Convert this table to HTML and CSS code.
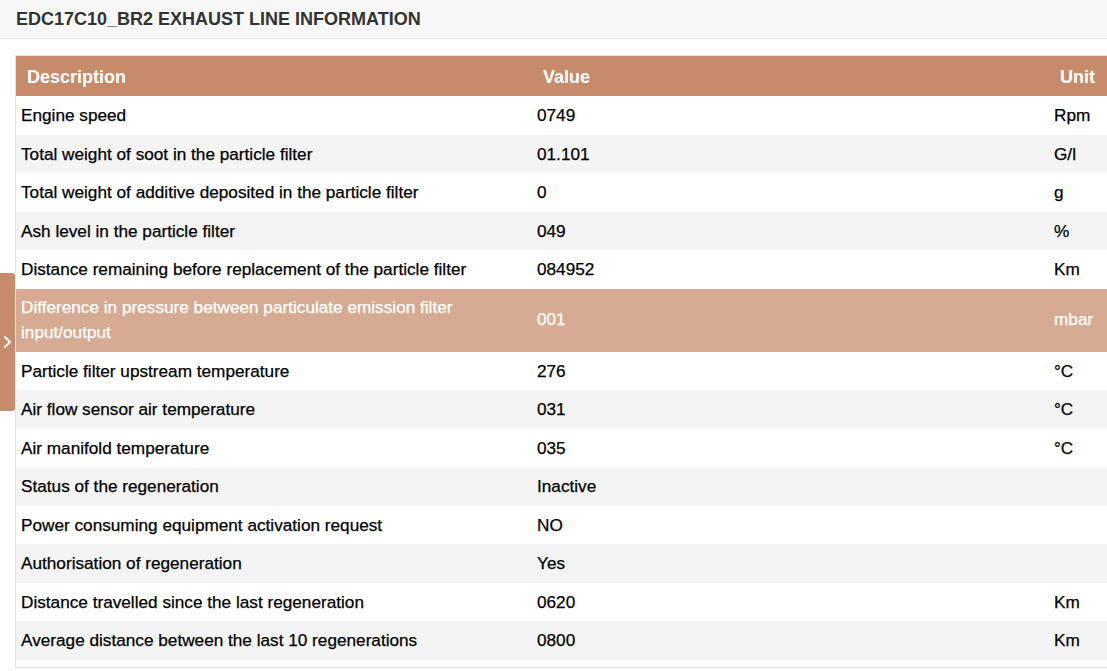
FILE: index.html
```html
<!DOCTYPE html>
<html>
<head>
<meta charset="utf-8">
<link rel="stylesheet" href="styles.css">
</head>
<body>
<div class="page">
  <header class="topbar">
    <h1 class="title">EDC17C10_BR2 EXHAUST LINE INFORMATION</h1>
  </header>
  <section class="panel">
    <table class="data">
      <colgroup>
        <col class="c-desc">
        <col class="c-val">
        <col class="c-unit">
      </colgroup>
      <thead>
        <tr><th>Description</th><th>Value</th><th>Unit</th></tr>
      </thead>
      <tbody>
        <tr><td>Engine speed</td><td>0749</td><td>Rpm</td></tr>
        <tr><td>Total weight of soot in the particle filter</td><td>01.101</td><td>G/l</td></tr>
        <tr><td>Total weight of additive deposited in the particle filter</td><td>0</td><td>g</td></tr>
        <tr><td>Ash level in the particle filter</td><td>049</td><td>%</td></tr>
        <tr><td>Distance remaining before replacement of the particle filter</td><td>084952</td><td>Km</td></tr>
        <tr class="active"><td>Difference in pressure between particulate emission filter input/output</td><td>001</td><td>mbar</td></tr>
        <tr><td>Particle filter upstream temperature</td><td>276</td><td>°C</td></tr>
        <tr><td>Air flow sensor air temperature</td><td>031</td><td>°C</td></tr>
        <tr><td>Air manifold temperature</td><td>035</td><td>°C</td></tr>
        <tr><td>Status of the regeneration</td><td>Inactive</td><td></td></tr>
        <tr><td>Power consuming equipment activation request</td><td>NO</td><td></td></tr>
        <tr><td>Authorisation of regeneration</td><td>Yes</td><td></td></tr>
        <tr><td>Distance travelled since the last regeneration</td><td>0620</td><td>Km</td></tr>
        <tr><td>Average distance between the last 10 regenerations</td><td>0800</td><td>Km</td></tr>
      </tbody>
    </table>
  </section>
  <button class="side-tab" aria-label="Open">
    <svg width="9" height="14" viewBox="0 0 9 14"><path d="M1.5 1.5 L7 7 L1.5 12.5" fill="none" stroke="#fff" stroke-width="2"/></svg>
  </button>
</div>
</body>
</html>
```

FILE: styles.css
```css
html, body {
  margin: 0;
  padding: 0;
  background: #fff;
  overflow: hidden;
}
body {
  width: 1107px;
  height: 671px;
  font-family: "Liberation Sans", Arial, sans-serif;
}
.page {
  position: relative;
  width: 1107px;
  height: 671px;
  overflow: hidden;
}
.topbar {
  height: 38px;
  background: #f7f7f7;
  border-bottom: 1px solid #e3e3e3;
  display: flex;
  align-items: center;
  padding-left: 16px;
}
.title {
  margin: 0;
  font-size: 18px;
  font-weight: bold;
  color: #333;
  line-height: 20px;
}
.panel {
  margin: 16px 0 0 15px;
  border: 1px solid #e6e6e6;
  border-right: none;
  padding-bottom: 7px;
  width: 1140px;
}
.data {
  border-collapse: collapse;
  table-layout: fixed;
  width: 1133px;
}
.c-desc { width: 516px; }
.c-val { width: 517px; }
.c-unit { width: 100px; }
.data th {
  background: #c68b6a;
  color: #fff;
  font-size: 18px;
  font-weight: bold;
  text-align: left;
  padding: 9px 11px 7px;
  line-height: 24px;
  height: 24px;
}
.data td {
  font-size: 17.2px;
  color: #000;
  padding: 7px 5px 7px;
  line-height: 24.5px;
  vertical-align: middle;
  -webkit-text-stroke: 0.25px currentColor;
}
.data tbody tr.active td {
  line-height: 25.5px;
  padding: 6px 5px 6px;
}
.data tbody tr:nth-child(even) td {
  background: #f4f4f4;
}
.data tbody tr.active td {
  background: #d7ab93;
  color: #fff;
}
.side-tab {
  position: absolute;
  left: 0;
  top: 273px;
  width: 15px;
  height: 138px;
  border: none;
  padding: 0 0 0 3px;
  margin: 0;
  background: #c68b6a;
  border-radius: 0 3px 3px 0;
  display: flex;
  align-items: center;
  justify-content: flex-start;
}
.side-tab svg { display: block; }
```
